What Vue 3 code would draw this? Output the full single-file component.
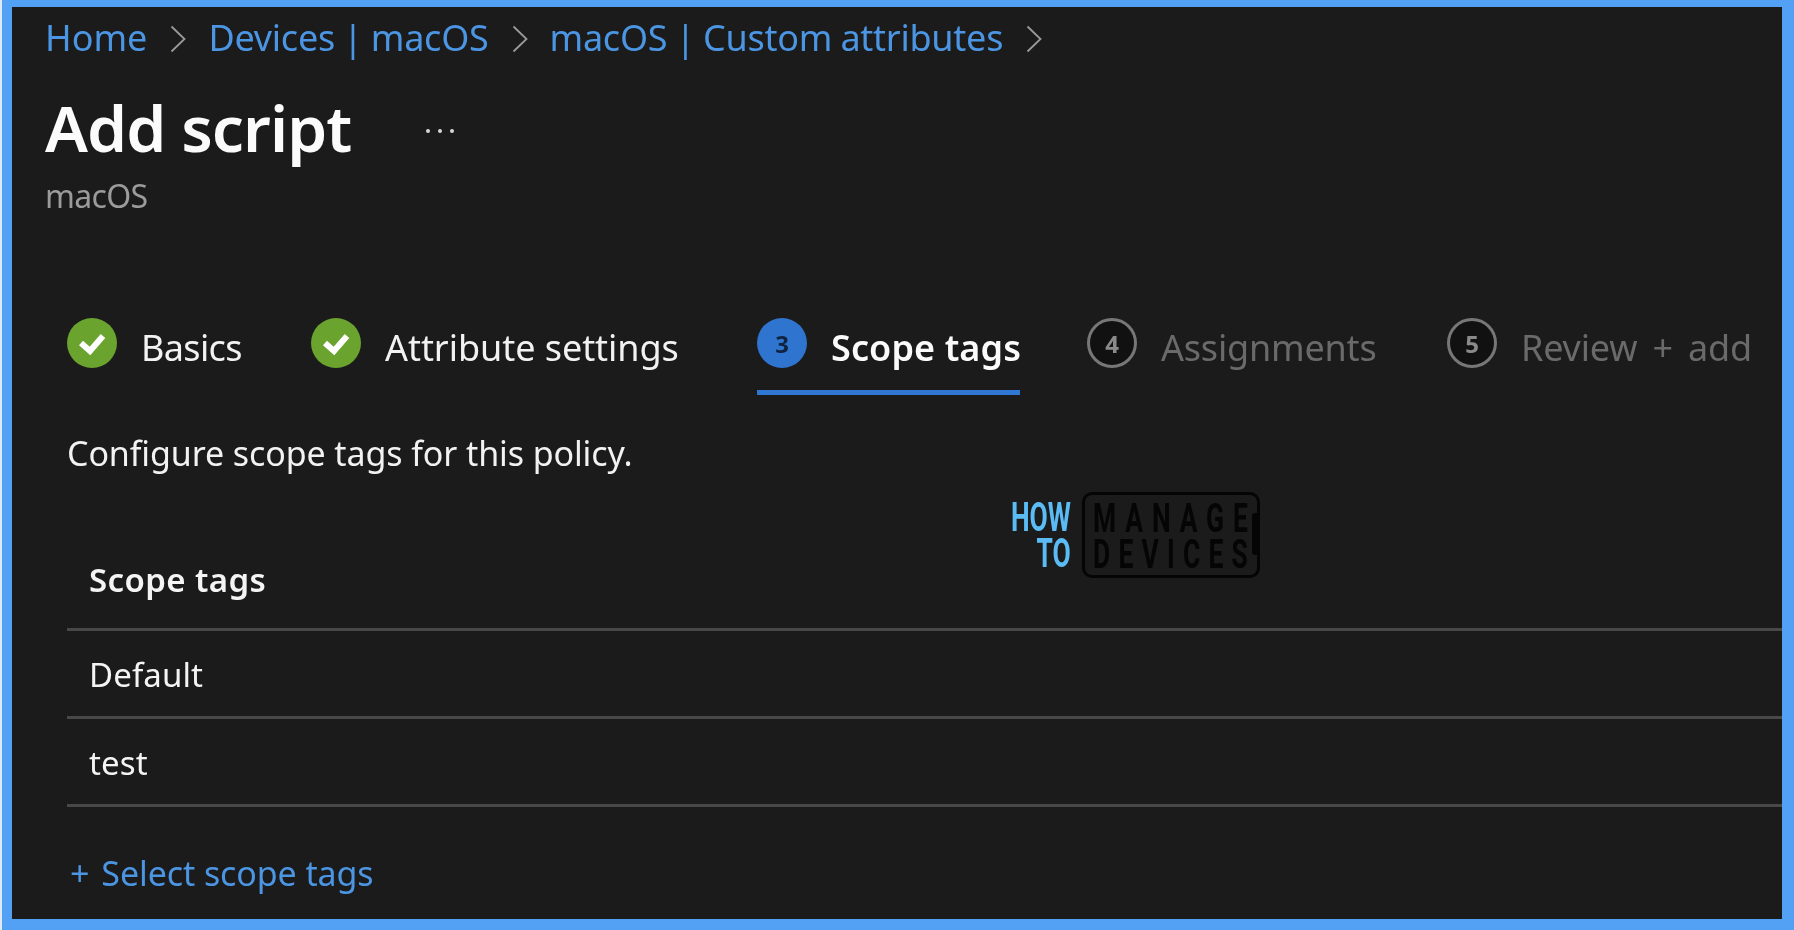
<script setup>
const crumbs = ['Home', 'Devices | macOS', 'macOS | Custom attributes']
const steps = [
  { label: 'Basics', state: 'done' },
  { label: 'Attribute settings', state: 'done' },
  { label: 'Scope tags', state: 'active', num: 3 },
  { label: 'Assignments', state: 'todo', num: 4 },
  { label: 'Review + add', state: 'todo', num: 5 },
]
const rows = ['Default', 'test']
</script>

<template>
  <div class="frame">
    <div class="panel">
      <nav class="crumbs">
        <template v-for="c in crumbs" :key="c">
          <a class="crumb">{{ c }}</a>
          <svg class="chev" viewBox="0 0 16 28"><path d="M1.5 1.5 14.5 14 1.5 26.5" fill="none" stroke="#9a9a9a" stroke-width="1.8"/></svg>
        </template>
      </nav>
      <div class="title-row">
        <h1 class="title">Add script</h1>
        <span class="more">
          <i></i><i></i><i></i>
        </span>
      </div>
      <div class="sub">macOS</div>

      <div class="body">
        <div class="steps">
          <div v-for="s in steps" :key="s.label" class="step" :class="s.state">
            <svg v-if="s.state === 'done'" class="badge" viewBox="0 0 50 50">
              <circle cx="25" cy="25" r="25" fill="#6ba32f"/>
              <path d="M14 25 23 33 36 18" fill="none" stroke="#fff" stroke-width="6"/>
            </svg>
            <span v-else class="badge num">{{ s.num }}</span>
            <span class="label">{{ s.label }}</span>
          </div>
        </div>

        <p class="intro">Configure scope tags for this policy.</p>

        <div class="table">
          <div class="row head">Scope tags</div>
          <div v-for="r in rows" :key="r" class="row">{{ r }}</div>
        </div>

        <a class="add"><span class="plus">+</span>Select scope tags</a>
      </div>

      <div class="logo">
        <div class="how"><span>HOW</span><span>TO</span></div>
        <div class="box"><span class="manage">MANAGE</span><span class="devices">DEVICES</span><i class="notch"></i></div>
      </div>
    </div>
  </div>
</template>

<style>
html, body { margin: 0; background: #52a1f5; }
</style>

<style scoped>
.frame {
  box-sizing: border-box;
  width: 1794px;
  height: 930px;
  padding: 7px 12px 11px 10px;
  background: #52a1f5;
  border-left: 2px solid #dfeaf7;
  font-family: "Noto Sans", "Open Sans", sans-serif;
  overflow: hidden;
}
.panel {
  position: relative;
  height: 912px;
  background: #1b1b1b;
  padding: 0 0 0 34px;
  overflow: hidden;
  filter: blur(0.4px);
}
.crumbs {
  display: flex;
  align-items: center;
  height: 60px;
  font-size: 36px;
  color: #4b95e3;
}
.crumb { white-space: nowrap; letter-spacing: -0.25px; word-spacing: -1px; }
.crumb:first-child { letter-spacing: 0; margin-left: -1px; }
.chev { width: 16px; height: 28px; margin: 4px 22px 0 23px; }
.title-row { display: flex; align-items: center; height: 92px; margin-top: 15px; }
.title {
  margin: 0;
  font-size: 64px;
  line-height: 92px;
  font-weight: 600;
  color: #fbfbfb;
  letter-spacing: -0.9px;
  margin-left: -1px;
}
.more { display: flex; gap: 8px; margin: 6px 0 0 75px; }
.more i { width: 4px; height: 4px; border-radius: 50%; background: #d8d8d8; }
.sub { font-size: 32px; line-height: 44px; color: #9b9b9b; letter-spacing: -0.7px; margin-left: -1px; }
.body { padding: 0 0 0 21px; }
.steps { display: flex; margin-top: 87px; height: 90px; }
.step { display: flex; align-items: center; height: 85px; position: relative; white-space: nowrap; }
.step:nth-child(1) { width: 244px; }
.step:nth-child(2) { width: 446px; }
.step:nth-child(3) { width: 330px; }
.step:nth-child(4) { width: 360px; }
.step:nth-child(1) .label { letter-spacing: -0.65px; }
.step:nth-child(2) .label { letter-spacing: -0.05px; }
.step:nth-child(3) .label { letter-spacing: 0.1px; }
.step:nth-child(4) .label { letter-spacing: -0.2px; }
.step:nth-child(5) .label { letter-spacing: -0.2px; word-spacing: 6px; }
.badge { width: 50px; height: 50px; flex: none; margin-top: -9px; }
.label { font-size: 36px; margin-left: 24px; color: #f2f2f2; letter-spacing: -0.45px; }
.num {
  box-sizing: border-box;
  display: flex;
  align-items: center;
  justify-content: center;
  border-radius: 50%;
  font-size: 24px;
  font-weight: 700;
}
.active .num { background: #2f75cf; color: #10233f; }
.active .label { font-weight: 600; color: #fbfbfb; }
.active::after {
  content: "";
  position: absolute;
  left: 0;
  width: 263px;
  bottom: -5px;
  height: 5px;
  background: #2f77d3;
}
.todo .num { border: 3px solid #777; color: #8a8a8a; background: #111; }
.todo .label { color: #6a6a6a; }
.intro {
  margin: 33px 0 0;
  font-size: 34px;
  line-height: 50px;
  color: #f2f2f2;
  letter-spacing: -0.1px;
}
.table { margin-top: 54px; }
.row {
  box-sizing: border-box;
  height: 88px;
  line-height: 87px;
  padding-left: 22px;
  font-size: 33px;
  color: #f4f4f4;
  border-bottom: 3px solid #484848;
  letter-spacing: 0.1px;
}
.head { height: 99px; line-height: 96px; font-weight: 600; letter-spacing: 0.4px; }
.add {
  display: flex;
  align-items: center;
  margin-top: 41px;
  height: 50px;
  font-size: 34px;
  color: #4b95e3;
  letter-spacing: -0.1px;
}
.plus { margin: 0 12px 0 3px; font-size: 34px; }
.logo {
  position: absolute;
  left: 1000px;
  top: 485px;
  display: flex;
  gap: 11px;
}
.how {
  display: flex;
  flex-direction: column;
  align-items: flex-end;
  width: 59px;
  padding-top: 8px;
  font-family: "Roboto", sans-serif;
  font-weight: 700;
  font-size: 40px;
  line-height: 36px;
  color: #5bbcf5;
}
.how span { transform: scaleX(0.66); transform-origin: right center; }
.box {
  position: relative;
  box-sizing: border-box;
  width: 178px;
  height: 86px;
  padding: 6px 0 0 8px;
  border: 3px solid #050505;
  border-radius: 10px;
  display: flex;
  flex-direction: column;
  font-family: "Roboto", sans-serif;
  font-weight: 700;
  font-size: 40px;
  line-height: 36px;
  color: #050505;
  white-space: nowrap;
}
.box span { transform: scaleX(0.66); transform-origin: left center; }
.manage { letter-spacing: 13.5px; }
.devices { letter-spacing: 12.5px; }
.notch {
  position: absolute;
  right: -3px;
  top: 18px;
  width: 8px;
  height: 42px;
  background: #050505;
  border-radius: 3px;
}
</style>
